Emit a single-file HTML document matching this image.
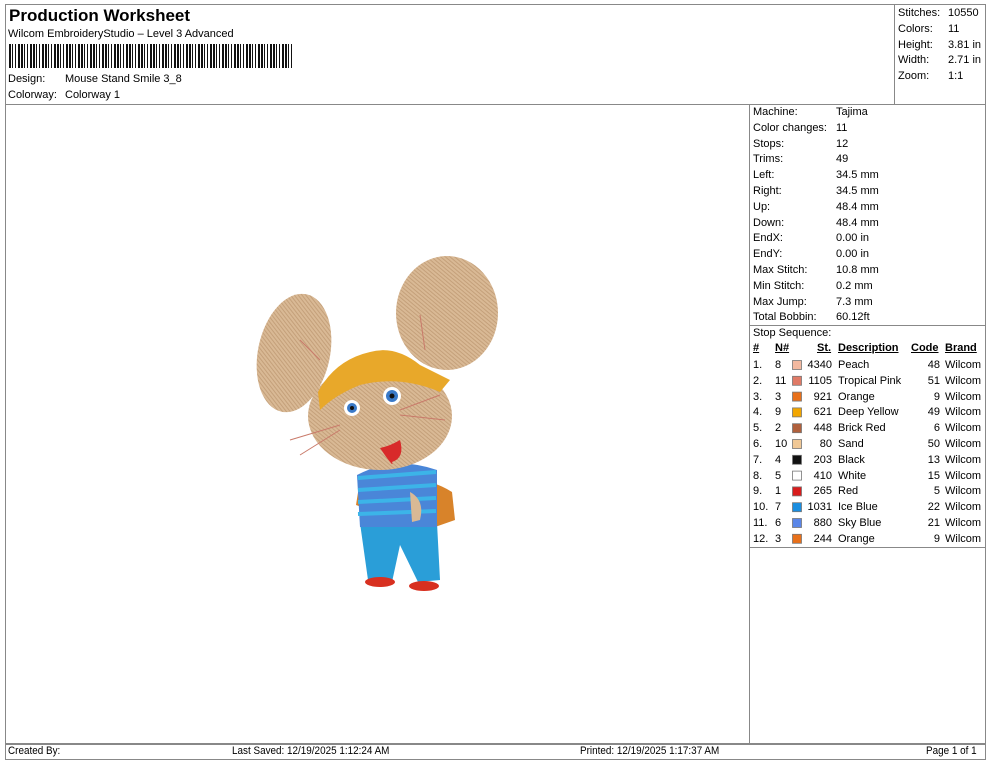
<!DOCTYPE html>
<html><head><meta charset="utf-8"><style>
body{margin:0;width:990px;height:762px;background:#fff;font-family:"Liberation Sans",sans-serif;color:#000;position:relative;overflow:hidden}
.a{position:absolute;white-space:nowrap}
.s{font-size:11px}
.ln{position:absolute;background:#888}
</style></head><body>
<div class="ln" style="left:5px;top:4px;width:981px;height:1px"></div>
<div class="ln" style="left:5px;top:4px;width:1px;height:756px"></div>
<div class="ln" style="left:985px;top:4px;width:1px;height:756px"></div>
<div class="ln" style="left:5px;top:759px;width:981px;height:1px"></div>
<div class="ln" style="left:5px;top:104px;width:981px;height:1px"></div>
<div class="ln" style="left:894px;top:4px;width:1px;height:100px"></div>
<div class="ln" style="left:749px;top:104px;width:1px;height:640px"></div>
<div class="ln" style="left:749px;top:325px;width:237px;height:1px"></div>
<div class="ln" style="left:749px;top:547px;width:237px;height:1px"></div>
<div class="ln" style="left:5px;top:743px;width:981px;height:2px"></div>

<div class="a" style="left:9px;top:6px;font-size:17px;font-weight:bold">Production Worksheet</div>
<div class="a s" style="left:8px;top:28px">Wilcom EmbroideryStudio – Level 3 Advanced</div>
<div class="a" style="left:9px;top:44px;width:285px;height:24px;background:repeating-linear-gradient(90deg,#111 0 2px,#fff 2px 3px,#111 3px 4px,#fff 4px 6px,#111 6px 7px,#fff 7px 9px,#111 9px 11px,#fff 11px 12px)"></div>
<div class="a s" style="left:8px;top:73px">Design:</div><div class="a s" style="left:65px;top:73px">Mouse Stand Smile 3_8</div>
<div class="a s" style="left:8px;top:89px">Colorway:</div><div class="a s" style="left:65px;top:89px">Colorway 1</div>

<div class="a s" style="left:898px;top:6px;line-height:15.8px">Stitches:<br>Colors:<br>Height:<br>Width:<br>Zoom:</div>
<div class="a s" style="left:948px;top:6px;line-height:15.8px">10550<br>11<br>3.81 in<br>2.71 in<br>1:1</div>

<div class="a s" style="left:753px;top:105px;line-height:15.8px">Machine:<br>Color changes:<br>Stops:<br>Trims:<br>Left:<br>Right:<br>Up:<br>Down:<br>EndX:<br>EndY:<br>Max Stitch:<br>Min Stitch:<br>Max Jump:<br>Total Bobbin:<br>Stop Sequence:</div>
<div class="a s" style="left:836px;top:105px;line-height:15.8px">Tajima<br>11<br>12<br>49<br>34.5 mm<br>34.5 mm<br>48.4 mm<br>48.4 mm<br>0.00 in<br>0.00 in<br>10.8 mm<br>0.2 mm<br>7.3 mm<br>60.12ft</div>

<div class="a s" style="left:753px;top:342px;font-weight:bold;text-decoration:underline">#</div>
<div class="a s" style="left:775px;top:342px;font-weight:bold;text-decoration:underline">N#</div>
<div class="a s" style="left:817px;top:342px;font-weight:bold;text-decoration:underline">St.</div>
<div class="a s" style="left:838px;top:342px;font-weight:bold;text-decoration:underline">Description</div>
<div class="a s" style="left:911px;top:342px;font-weight:bold;text-decoration:underline">Code</div>
<div class="a s" style="left:945px;top:342px;font-weight:bold;text-decoration:underline">Brand</div>

<div class="a s" style="left:753px;top:358px;line-height:15.8px">1.<br>2.<br>3.<br>4.<br>5.<br>6.<br>7.<br>8.<br>9.<br>10.<br>11.<br>12.</div>
<div class="a s" style="left:775px;top:358px;line-height:15.8px">8<br>11<br>3<br>9<br>2<br>10<br>4<br>5<br>1<br>7<br>6<br>3</div>
<div class="a s" style="left:800px;top:358px;width:32px;text-align:right;line-height:15.8px">4340<br>1105<br>921<br>621<br>448<br>80<br>203<br>410<br>265<br>1031<br>880<br>244</div>
<div class="a s" style="left:838px;top:358px;line-height:15.8px">Peach<br>Tropical Pink<br>Orange<br>Deep Yellow<br>Brick Red<br>Sand<br>Black<br>White<br>Red<br>Ice Blue<br>Sky Blue<br>Orange</div>
<div class="a s" style="left:910px;top:358px;width:30px;text-align:right;line-height:15.8px">48<br>51<br>9<br>49<br>6<br>50<br>13<br>15<br>5<br>22<br>21<br>9</div>
<div class="a s" style="left:945px;top:358px;line-height:15.8px">Wilcom<br>Wilcom<br>Wilcom<br>Wilcom<br>Wilcom<br>Wilcom<br>Wilcom<br>Wilcom<br>Wilcom<br>Wilcom<br>Wilcom<br>Wilcom</div>
<svg class="a" style="left:792px;top:358px" width="12" height="192">
<g stroke="#777" stroke-width="0.8">
<rect x="0.5" y="2.5" width="9" height="9" fill="#f3b9a0"/>
<rect x="0.5" y="18.3" width="9" height="9" fill="#e07a66"/>
<rect x="0.5" y="34.1" width="9" height="9" fill="#e8701a"/>
<rect x="0.5" y="49.9" width="9" height="9" fill="#f2a600"/>
<rect x="0.5" y="65.7" width="9" height="9" fill="#b0603c"/>
<rect x="0.5" y="81.5" width="9" height="9" fill="#f0c896"/>
<rect x="0.5" y="97.3" width="9" height="9" fill="#111"/>
<rect x="0.5" y="113.1" width="9" height="9" fill="#fff"/>
<rect x="0.5" y="128.9" width="9" height="9" fill="#d81c1c"/>
<rect x="0.5" y="144.7" width="9" height="9" fill="#1a8ee0"/>
<rect x="0.5" y="160.5" width="9" height="9" fill="#5a86e8"/>
<rect x="0.5" y="176.3" width="9" height="9" fill="#e8701a"/>
</g></svg>

<svg class="a" style="left:0;top:0" width="750" height="740">
<defs><pattern id="st" width="3" height="3" patternUnits="userSpaceOnUse" patternTransform="rotate(40)"><rect width="3" height="3" fill="#d9b995"/><rect width="3" height="1" fill="#c4a07a"/></pattern></defs>
<ellipse cx="294" cy="353" rx="36" ry="60" transform="rotate(12 294 353)" fill="url(#st)"/>
<ellipse cx="447" cy="313" rx="51" ry="57" fill="url(#st)"/>
<path d="M405 480 Q430 478 452 492 L455 520 L435 527 L415 510Z" fill="#d8832a"/>
<path d="M360 480 L372 478 L370 510 L356 505Z" fill="#d8832a"/>
<path d="M360 523 L437 523 L440 580 L418 582 L400 545 L392 582 L368 580Z" fill="#2a9ed8"/>
<path d="M357 475 Q395 455 437 470 L437 527 L360 527Z" fill="#4a86d8"/>
<g stroke="#3cb4e8" stroke-width="4"><line x1="358" y1="478" x2="436" y2="472"/><line x1="358" y1="490" x2="436" y2="485"/><line x1="358" y1="502" x2="436" y2="498"/><line x1="358" y1="514" x2="436" y2="511"/></g>
<path d="M410 492 Q425 500 420 520 L412 522 Z" fill="#d9b995"/>
<ellipse cx="380" cy="582" rx="15" ry="5" fill="#d83020"/><ellipse cx="424" cy="586" rx="15" ry="5" fill="#d83020"/>
<ellipse cx="380" cy="416" rx="72" ry="54" fill="url(#st)"/>
<path d="M318 392 Q335 360 370 352 Q395 345 420 365 L450 380 L440 392 Q400 375 360 385 Q335 395 320 410Z" fill="#e8a82a"/>
<circle cx="352" cy="408" r="8" fill="#fff"/><circle cx="352" cy="408" r="5" fill="#3a7ac8"/><circle cx="352" cy="408" r="2" fill="#111"/>
<circle cx="392" cy="396" r="9" fill="#fff"/><circle cx="392" cy="396" r="6" fill="#3a7ac8"/><circle cx="392" cy="396" r="2.5" fill="#111"/>
<path d="M380 448 Q395 470 392 462 Q405 458 400 440 Q390 446 380 448Z" fill="#d82a2a"/>
<g stroke="#c97a6a" stroke-width="1" fill="none"><path d="M340 425 L290 440"/><path d="M340 430 L300 455"/><path d="M400 410 L440 395"/><path d="M400 415 L445 420"/><path d="M420 315 L425 350"/><path d="M300 340 L320 360"/></g>
</svg>

<div class="a" style="left:8px;top:745px;font-size:11px;transform:scaleX(0.9);transform-origin:left">Created By:</div>
<div class="a" style="left:232px;top:745px;font-size:11px;transform:scaleX(0.9);transform-origin:left">Last Saved: 12/19/2025 1:12:24 AM</div>
<div class="a" style="left:580px;top:745px;font-size:11px;transform:scaleX(0.9);transform-origin:left">Printed: 12/19/2025 1:17:37 AM</div>
<div class="a" style="left:926px;top:745px;font-size:11px;transform:scaleX(0.9);transform-origin:left">Page 1 of 1</div>
</body></html>
